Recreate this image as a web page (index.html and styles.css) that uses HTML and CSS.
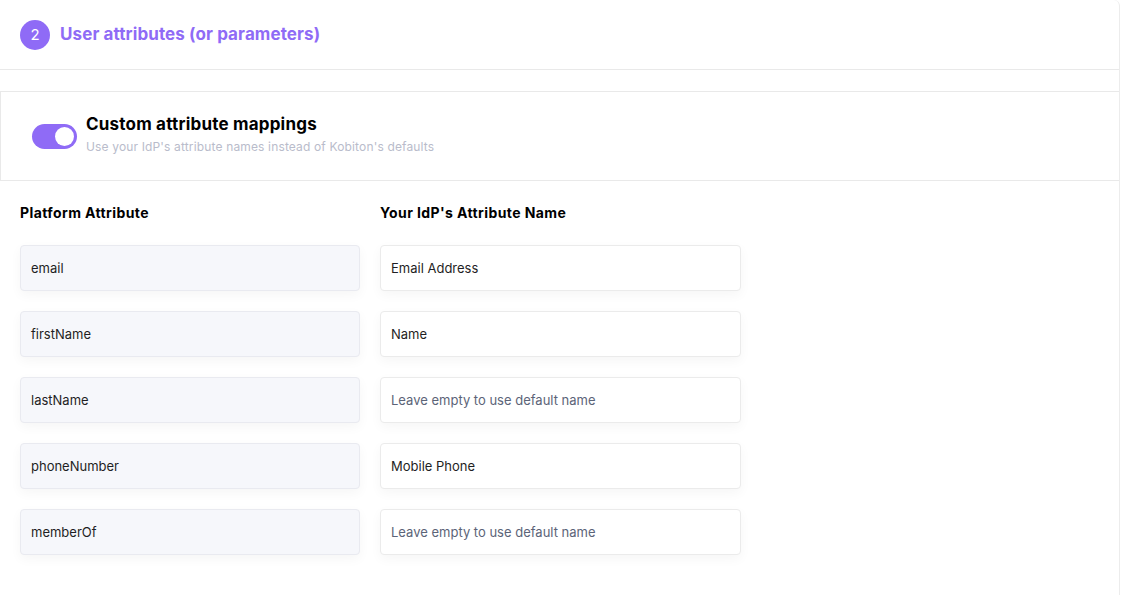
FILE: index.html
```html
<!DOCTYPE html>
<html lang="en">
<head>
    <meta charset="UTF-8">
    <meta name="viewport" content="width=device-width, initial-scale=1.0">
    <title>User attributes</title>
    <link rel="stylesheet" href="styles.css">
</head>
<body>
    <div class="card">
        <div class="step-header">
            <span class="step-number">2</span>
            <h2 class="step-title">User attributes (or parameters)</h2>
        </div>

        <div class="mapping-toggle">
            <span class="switch"><span class="knob"></span></span>
            <div class="toggle-text">
                <div class="toggle-title">Custom attribute mappings</div>
                <div class="toggle-sub">Use your IdP's attribute names instead of Kobiton's defaults</div>
            </div>
        </div>

        <div class="mapping-grid">
            <div class="col-head">Platform Attribute</div>
            <div class="col-head">Your IdP's Attribute Name</div>

            <div class="field readonly">email</div>
            <div class="field">Email Address</div>

            <div class="field readonly">firstName</div>
            <div class="field">Name</div>

            <div class="field readonly">lastName</div>
            <div class="field placeholder">Leave empty to use default name</div>

            <div class="field readonly">phoneNumber</div>
            <div class="field">Mobile Phone</div>

            <div class="field readonly">memberOf</div>
            <div class="field placeholder">Leave empty to use default name</div>
        </div>
    </div>
</body>
</html>
```

FILE: styles.css
```css
body {
    margin: 0;
    background-color: #ffffff;
    font-family: Inter, "Open Sans", sans-serif;
    color: #1f1f24;
}

.card {
    width: 1120px;
    height: 595px;
    border-right: 1px solid #ececec;
    border-top-right-radius: 6px;
    box-sizing: border-box;
}

.step-header {
    display: flex;
    align-items: center;
    height: 70px;
    padding-left: 20px;
    border-bottom: 1px solid #e9e9e9;
    box-sizing: border-box;
}

.step-number {
    width: 30px;
    height: 30px;
    border-radius: 50%;
    background-color: #8f6bf6;
    color: #ffffff;
    font-size: 15px;
    display: flex;
    align-items: center;
    justify-content: center;
    margin-right: 10px;
}

.step-title {
    margin: 0 0 1px 0;
    font-size: 17px;
    font-weight: 700;
    color: #8f6bf6;
    letter-spacing: 0.1px;
}

.mapping-toggle {
    display: flex;
    align-items: center;
    height: 90px;
    margin-top: 21px;
    padding-left: 31px;
    border: 1px solid #e9e9e9;
    border-right: none;
    box-sizing: border-box;
}

.switch {
    width: 45px;
    height: 25px;
    border-radius: 13px;
    background-color: #8f6bf6;
    display: flex;
    align-items: center;
    justify-content: flex-end;
    padding: 0 3px;
    box-sizing: border-box;
    margin-right: 9px;
    margin-top: 1px;
}

.knob {
    width: 19px;
    height: 19px;
    border-radius: 50%;
    background-color: #ffffff;
}

.toggle-title {
    font-size: 17px;
    font-weight: 700;
    color: #000000;
    letter-spacing: 0.2px;
    margin-top: -4px;
}

.toggle-sub {
    font-size: 12px;
    color: #b9bccb;
    margin-top: 5px;
    letter-spacing: 0.15px;
}

.mapping-grid {
    display: grid;
    grid-template-columns: 340px 361px;
    column-gap: 20px;
    row-gap: 20px;
    padding: 23px 20px 0 20px;
}

.col-head {
    font-size: 14px;
    font-weight: 700;
    color: #000000;
    letter-spacing: 0.4px;
    margin-bottom: 4px;
}

.field {
    height: 46px;
    display: flex;
    align-items: center;
    padding-left: 10px;
    font-size: 13px;
    color: #1f1f24;
    background-color: #ffffff;
    border: 1px solid #ebebeb;
    border-radius: 4px;
    box-sizing: border-box;
    box-shadow: 0 4px 12px rgba(0, 0, 0, 0.04);
}

.field.readonly {
    background-color: #f6f7fb;
    border-color: #e9eaf0;
}

.field.placeholder {
    color: #5c6478;
}
```
